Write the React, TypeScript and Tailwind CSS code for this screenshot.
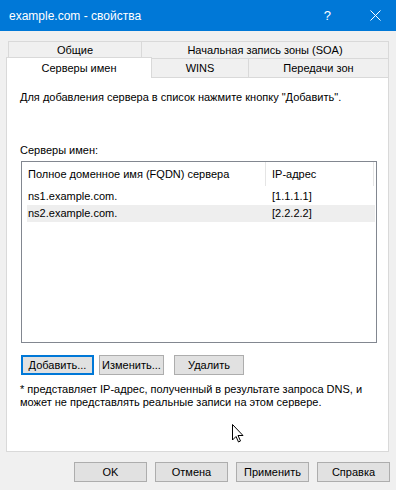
import React from 'react';

const font = { fontFamily: '"Liberation Sans", "Noto Sans", sans-serif' };

const Tab: React.FC<{ label: string; className: string }> = ({ label, className }) => (
  <div className={`flex shrink-0 items-center justify-center border border-[#d9d9d9] bg-[#f0f0f0] ${className}`}>
    {label}
  </div>
);

const Btn: React.FC<{ label: string; focused?: boolean; className?: string }> = ({ label, focused, className }) => (
  <button
    className={`h-[20px] shrink-0 bg-[#e1e1e1] leading-none ${focused ? 'border-2 border-[#0078d7]' : 'border border-[#adadad]'} ${className ?? ''}`}
  >
    {label}
  </button>
);

const servers = [
  { name: 'ns1.example.com.', ip: '[1.1.1.1]' },
  { name: 'ns2.example.com.', ip: '[2.2.2.2]' },
];

export default function App() {
  return (
    <div className="relative flex h-[490px] w-[396px] flex-col whitespace-nowrap bg-[#f0f0f0] text-[11px] text-black" style={font}>
      {/* title bar */}
      <div className="flex h-[31px] shrink-0 items-center bg-[#0078d7] pl-[9px] text-[12px] text-white">
        <span className="flex-1">example.com - свойства</span>
        <span className="mr-[39px] text-[13px]">?</span>
        <svg width="11" height="11" viewBox="0 0 11 11" className="mr-[15px]">
          <path d="M0.5 0.5 L10.5 10.5 M10.5 0.5 L0.5 10.5" stroke="white" strokeWidth="1" />
        </svg>
      </div>

      {/* tabs */}
      <div className="ml-[8px] mt-[10px] flex h-[17px] shrink-0">
        <Tab label="Общие" className="w-[134px] border-b-0" />
        <Tab label="Начальная запись зоны (SOA)" className="w-[247px] border-b-0 border-l-0" />
      </div>
      <div className="ml-[6px] flex h-[19px] shrink-0 items-end">
        <div className="relative z-10 -mb-px flex h-[21px] w-[146px] shrink-0 items-center justify-center border border-b-0 border-[#d9d9d9] bg-white">
          Серверы имен
        </div>
        <Tab label="WINS" className="h-[19px] w-[97px] border-l-0 border-b-0" />
        <Tab label="Передачи зон" className="h-[19px] w-[140px] border-l-0 border-b-0" />
      </div>

      {/* panel */}
      <div className="ml-[6px] flex h-[375px] w-[383px] shrink-0 flex-col border border-[#d9d9d9] bg-white pl-[13px] pt-[11px]">
        <p className="leading-[16px]">Для добавления сервера в список нажмите кнопку "Добавить".</p>
        <p className="mt-[37px] leading-[16px]">Серверы имен:</p>

        <div className="ml-px mt-[3px] flex h-[182px] w-[356px] shrink-0 flex-col border border-[#828790] pl-[5px]">
          <div className="flex h-[24px] items-center">
            <div className="flex h-full w-[239px] items-center border-r border-[#e5e5e5] pl-[1px]">
              Полное доменное имя (FQDN) сервера
            </div>
            <div className="flex h-full w-[108px] items-center border-r border-[#e5e5e5] pl-[6px]">IP-адрес</div>
          </div>
          <div className="mt-[2px] flex flex-col">
            {servers.map((s, i) => (
              <div key={s.name} className={`flex h-[17px] w-[348px] items-center ${i === 1 ? 'bg-[#eeeeee]' : ''}`}>
                <span className="w-[239px] pl-[1px]">{s.name}</span>
                <span className="pl-[6px]">{s.ip}</span>
              </div>
            ))}
          </div>
        </div>

        <div className="ml-px mt-[12px] flex gap-[5px]">
          <Btn label="Добавить..." focused className="w-[73px]" />
          <Btn label="Изменить..." className="w-[65px]" />
          <Btn label="Удалить" className="ml-[5px] w-[70px]" />
        </div>

        <p className="mt-[8px] leading-[13px]">
          * представляет IP-адрес, полученный в результате запроса DNS, и
          <br />
          может не представлять реальные записи на этом сервере.
        </p>
      </div>

      {/* bottom buttons */}
      <div className="mr-[6px] mt-[10px] flex justify-end gap-[8px]">
        <Btn label="OK" className="w-[73px]" />
        <Btn label="Отмена" className="w-[73px]" />
        <Btn label="Применить" className="w-[73px]" />
        <Btn label="Справка" className="w-[73px]" />
      </div>

      {/* mouse pointer */}
      <svg className="absolute left-[232px] top-[424px]" width="12" height="19" viewBox="0 0 12 19">
        <path d="M0.5 0.5 L0.5 16 L4 12.5 L6.5 18 L8.5 17 L6 11.5 L11 11.5 Z" fill="white" stroke="black" strokeWidth="1" />
      </svg>
    </div>
  );
}
